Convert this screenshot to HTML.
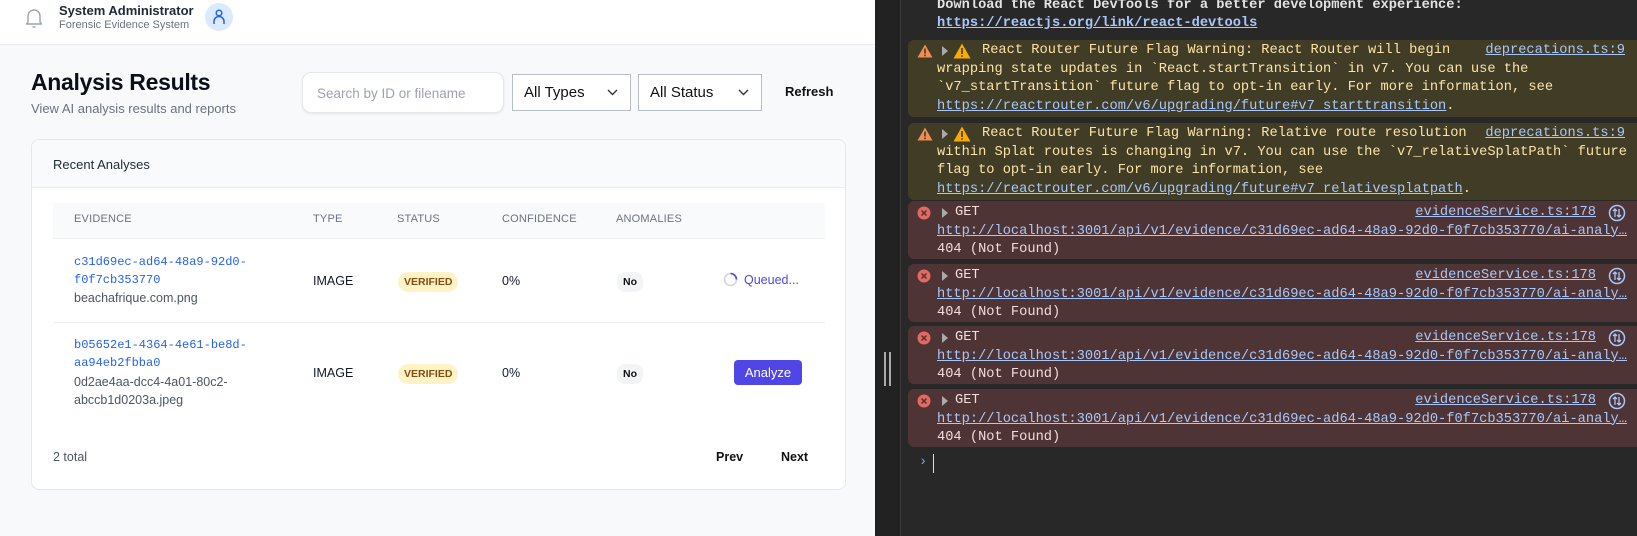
<!DOCTYPE html>
<html><head><meta charset="utf-8"><style>
*{box-sizing:border-box;margin:0;padding:0}
html,body{width:1637px;height:536px;overflow:hidden}
body{position:relative;font-family:"Liberation Sans",sans-serif;background:#f8f9fb}
.a{position:absolute}
#left{position:absolute;left:0;top:0;width:875px;height:536px;background:#f8f9fb}
#hdr{position:absolute;left:0;top:0;width:875px;height:45px;background:#fff;border-bottom:1px solid #eceef1}
.t1{font-size:13px;font-weight:bold;color:#1f2937;white-space:nowrap}
.t2{font-size:11px;color:#6b7280;white-space:nowrap}
.sel{position:absolute;top:74px;height:37px;border:1.5px solid #b9bec6;background:#fff;font-size:15px;color:#111;padding:9px 0 0 11px}
.sel svg{position:absolute;right:12px;top:14px}
#card{position:absolute;left:31px;top:139px;width:815px;height:351px;background:#fff;border:1px solid #e5e7eb;border-radius:8px;overflow:hidden}
.th{position:absolute;top:213px;font-size:11px;color:#6b7280;letter-spacing:.2px}
.mono{font-family:"Liberation Mono",monospace;font-size:12px;color:#2563eb}
.fn{font-size:12.5px;color:#4b5563}
.cell{font-size:12.5px;color:#111827}
.badge{position:absolute;background:#fef3c7;color:#854d0e;font-size:10.5px;font-weight:bold;border-radius:10px;padding:4px 6px}
.no{position:absolute;background:#f3f4f6;color:#111;font-size:10.5px;font-weight:bold;border-radius:8px;padding:4px 6px}
#con{position:absolute;left:875px;top:0;width:762px;height:536px;background:#282828;font-family:"Liberation Mono",monospace;font-size:13.7px;line-height:18.5px;color:#e3e3e3}
#strip{position:absolute;left:0;top:0;width:26px;height:536px;background:#222;border-right:1px solid #3c3c3c}
.box{position:absolute;left:33px;right:0;border-radius:6px 0 0 6px}
.w{background:#413c26;color:#fbe3a8;padding-top:2px;height:77px}
.e{background:#4e3434;color:#f2dcda;padding-top:3px;height:58px}
.ln{padding-left:29px;height:18.5px;white-space:pre;overflow:hidden}
.lk{color:#a8c7fa;text-decoration:underline}
.rt{position:absolute;top:2px;color:#a8c7fa;text-decoration:underline;white-space:pre}
</style></head><body>
<div id="left">
 <div id="hdr">
  <svg class="a" style="left:25px;top:7px" width="18" height="22" viewBox="0 0 18 22"><path d="M3 15V9a6 6 0 0 1 12 0v6l1.5 2h-15z" fill="none" stroke="#9ca3af" stroke-width="1.4" stroke-linejoin="round"/><path d="M7.5 19.5l1.5 1 1.5-1" fill="none" stroke="#9ca3af" stroke-width="1.2"/></svg>
  <div class="a t1" style="left:59px;top:3px">System Administrator</div>
  <div class="a t2" style="left:59px;top:19px">Forensic Evidence System</div>
  <div class="a" style="left:205px;top:3px;width:28px;height:28px;border-radius:50%;background:#dbeafe"></div>
  <svg class="a" style="left:212px;top:8px" width="14" height="18" viewBox="0 0 14 18"><circle cx="7" cy="5" r="2.8" fill="none" stroke="#2563eb" stroke-width="1.5"/><path d="M2 16v-2.5a5 5 0 0 1 10 0V16" fill="none" stroke="#2563eb" stroke-width="1.5"/></svg>
 </div>
 <div class="a" style="left:31px;top:69px;font-size:23px;font-weight:bold;color:#0b0f19;white-space:nowrap;letter-spacing:-0.3px">Analysis Results</div>
 <div class="a" style="left:31px;top:101px;font-size:13px;color:#6b7280;white-space:nowrap">View AI analysis results and reports</div>
 <div class="a" style="left:302px;top:72px;width:202px;height:41px;border:1px solid #e5e7eb;border-radius:9px;background:#fff;box-shadow:0 1px 2px rgba(0,0,0,.08);font-size:13.5px;color:#9ca3af;padding:13px 0 0 14px;white-space:nowrap">Search by ID or filename</div>
 <div class="sel" style="left:512px;width:119px">All Types<svg width="11" height="7" viewBox="0 0 11 7"><path d="M1 1l4.5 4.5L10 1" fill="none" stroke="#333" stroke-width="1.4"/></svg></div>
 <div class="sel" style="left:638px;width:124px">All Status<svg width="11" height="7" viewBox="0 0 11 7"><path d="M1 1l4.5 4.5L10 1" fill="none" stroke="#333" stroke-width="1.4"/></svg></div>
 <div class="a" style="left:785px;top:84px;font-size:13px;font-weight:bold;color:#111">Refresh</div>
 <div id="card">
  <div class="a" style="left:0;top:0;width:815px;height:48px;background:#f9fafb;border-bottom:1px solid #eceef1"></div>
  <div class="a" style="left:21px;top:17px;font-size:13px;color:#1f2937;white-space:nowrap">Recent Analyses</div>
  <div class="a" style="left:21px;top:63px;width:772px;height:36px;background:#f9fafb;border-bottom:1px solid #eef0f3"></div>
  <div class="a" style="left:21px;top:182px;width:772px;height:1px;background:#eceef1"></div>
 </div>
 <div class="th" style="left:74px">EVIDENCE</div>
 <div class="th" style="left:313px">TYPE</div>
 <div class="th" style="left:397px">STATUS</div>
 <div class="th" style="left:502px">CONFIDENCE</div>
 <div class="th" style="left:616px">ANOMALIES</div>
 <div class="a mono" style="left:74px;top:253px;line-height:18px">c31d69ec-ad64-48a9-92d0-<br>f0f7cb353770</div>
 <div class="a fn" style="left:74px;top:291px">beachafrique.com.png</div>
 <div class="a cell" style="left:313px;top:274px">IMAGE</div>
 <div class="badge" style="left:398px;top:272px">VERIFIED</div>
 <div class="a cell" style="left:502px;top:274px">0%</div>
 <div class="no" style="left:617px;top:272px">No</div>
 <svg class="a" style="left:723px;top:272px" width="15" height="15" viewBox="0 0 15 15"><circle cx="7.5" cy="7.5" r="6" fill="none" stroke="#d1d5db" stroke-width="1.6"/><path d="M7.5 1.5a6 6 0 0 1 6 6" fill="none" stroke="#4f46e5" stroke-width="1.6"/></svg>
 <div class="a" style="left:744px;top:273px;font-size:12.5px;color:#4f46e5">Queued...</div>
 <div class="a mono" style="left:74px;top:336px;line-height:18px">b05652e1-4364-4e61-be8d-<br>aa94eb2fbba0</div>
 <div class="a fn" style="left:74px;top:373px;line-height:18px">0d2ae4aa-dcc4-4a01-80c2-<br>abccb1d0203a.jpeg</div>
 <div class="a cell" style="left:313px;top:366px">IMAGE</div>
 <div class="badge" style="left:398px;top:364px">VERIFIED</div>
 <div class="a cell" style="left:502px;top:366px">0%</div>
 <div class="no" style="left:617px;top:364px">No</div>
 <div class="a" style="left:734px;top:360px;width:68px;height:25px;background:#4f46e5;border-radius:4px;color:#fff;font-size:13px;text-align:center;padding-top:5px">Analyze</div>
 <div class="a" style="left:53px;top:450px;font-size:12.5px;color:#4b5563">2 total</div>
 <div class="a" style="left:716px;top:450px;font-size:12.5px;font-weight:bold;color:#111">Prev</div>
 <div class="a" style="left:781px;top:450px;font-size:12.5px;font-weight:bold;color:#111">Next</div>
</div>
<div id="con">
 <div id="strip"><div class="a" style="left:9px;top:352px;width:2px;height:34px;background:#aaa"></div><div class="a" style="left:14px;top:352px;width:2px;height:34px;background:#aaa"></div></div>
 <div class="a" style="left:62px;top:-3px;white-space:pre;font-weight:bold;color:#e3e3e3">Download the React DevTools for a better development experience:</div>
 <div class="a lk" style="left:62px;top:15px;white-space:pre;font-weight:bold">https://reactjs.org/link/react-devtools</div>

 <div class="box w" style="top:40px"><svg class="a" style="left:9px;top:4px" width="16" height="14" viewBox="0 0 16 14"><path d="M8 0.5L15.5 13.5H0.5z" fill="#f28b54"/><rect x="7.2" y="4.5" width="1.6" height="5" fill="#413c26"/><rect x="7.2" y="10.6" width="1.6" height="1.6" fill="#413c26"/></svg><svg class="a" style="left:33px;top:6px" width="8" height="10" viewBox="0 0 8 10"><path d="M1 0l6 5-6 5z" fill="#aaa"/></svg><svg class="a" style="left:45px;top:3px" width="18" height="16" viewBox="0 0 18 16"><path d="M9 0.5L17.5 15.5H0.5z" fill="#f9ab00"/><rect x="8.2" y="5" width="1.6" height="6" fill="#413c26"/><rect x="8.2" y="12.2" width="1.6" height="1.6" fill="#413c26"/></svg><div class="ln" style="padding-left:74px">React Router Future Flag Warning: React Router will begin</div><div class="ln">wrapping state updates in `React.startTransition` in v7. You can use the</div><div class="ln">`v7_startTransition` future flag to opt-in early. For more information, see</div><div class="ln"><span class="lk">https://reactrouter.com/v6/upgrading/future#v7_starttransition</span>.</div><div class="rt" style="right:12px">deprecations.ts:9</div></div>
 <div class="box w" style="top:123px"><svg class="a" style="left:9px;top:4px" width="16" height="14" viewBox="0 0 16 14"><path d="M8 0.5L15.5 13.5H0.5z" fill="#f28b54"/><rect x="7.2" y="4.5" width="1.6" height="5" fill="#413c26"/><rect x="7.2" y="10.6" width="1.6" height="1.6" fill="#413c26"/></svg><svg class="a" style="left:33px;top:6px" width="8" height="10" viewBox="0 0 8 10"><path d="M1 0l6 5-6 5z" fill="#aaa"/></svg><svg class="a" style="left:45px;top:3px" width="18" height="16" viewBox="0 0 18 16"><path d="M9 0.5L17.5 15.5H0.5z" fill="#f9ab00"/><rect x="8.2" y="5" width="1.6" height="6" fill="#413c26"/><rect x="8.2" y="12.2" width="1.6" height="1.6" fill="#413c26"/></svg><div class="ln" style="padding-left:74px">React Router Future Flag Warning: Relative route resolution</div><div class="ln">within Splat routes is changing in v7. You can use the `v7_relativeSplatPath` future</div><div class="ln">flag to opt-in early. For more information, see</div><div class="ln"><span class="lk">https://reactrouter.com/v6/upgrading/future#v7_relativesplatpath</span>.</div><div class="rt" style="right:12px">deprecations.ts:9</div></div>

 <div class="box e" style="top:201px"><svg class="a" style="left:9px;top:5px" width="14" height="14" viewBox="0 0 14 14"><circle cx="7" cy="7" r="6.5" fill="#e46962"/><path d="M4.5 4.5l5 5M9.5 4.5l-5 5" stroke="#4e3434" stroke-width="1.5"/></svg><svg class="a" style="left:33px;top:7px" width="8" height="10" viewBox="0 0 8 10"><path d="M1 0l6 5-6 5z" fill="#aaa"/></svg><div class="ln" style="padding-left:47px">GET</div><div class="ln"><span class="lk">http://localhost:3001/api/v1/evidence/c31d69ec-ad64-48a9-92d0-f0f7cb353770/ai-analy…</span></div><div class="ln">404 (Not Found)</div><div class="rt" style="right:41px;top:3px">evidenceService.ts:178</div><svg class="a" style="right:11px;top:3px" width="18" height="18" viewBox="0 0 18 18"><circle cx="9" cy="9" r="7.5" fill="none" stroke="#a8c7fa" stroke-width="1.5"/><path d="M7 13V5M5 7l2-2 2 2M11 5v8M9 11l2 2 2-2" fill="none" stroke="#a8c7fa" stroke-width="1.3"/></svg></div>
 <div class="box e" style="top:264px"><svg class="a" style="left:9px;top:5px" width="14" height="14" viewBox="0 0 14 14"><circle cx="7" cy="7" r="6.5" fill="#e46962"/><path d="M4.5 4.5l5 5M9.5 4.5l-5 5" stroke="#4e3434" stroke-width="1.5"/></svg><svg class="a" style="left:33px;top:7px" width="8" height="10" viewBox="0 0 8 10"><path d="M1 0l6 5-6 5z" fill="#aaa"/></svg><div class="ln" style="padding-left:47px">GET</div><div class="ln"><span class="lk">http://localhost:3001/api/v1/evidence/c31d69ec-ad64-48a9-92d0-f0f7cb353770/ai-analy…</span></div><div class="ln">404 (Not Found)</div><div class="rt" style="right:41px;top:3px">evidenceService.ts:178</div><svg class="a" style="right:11px;top:3px" width="18" height="18" viewBox="0 0 18 18"><circle cx="9" cy="9" r="7.5" fill="none" stroke="#a8c7fa" stroke-width="1.5"/><path d="M7 13V5M5 7l2-2 2 2M11 5v8M9 11l2 2 2-2" fill="none" stroke="#a8c7fa" stroke-width="1.3"/></svg></div>
 <div class="box e" style="top:326px"><svg class="a" style="left:9px;top:5px" width="14" height="14" viewBox="0 0 14 14"><circle cx="7" cy="7" r="6.5" fill="#e46962"/><path d="M4.5 4.5l5 5M9.5 4.5l-5 5" stroke="#4e3434" stroke-width="1.5"/></svg><svg class="a" style="left:33px;top:7px" width="8" height="10" viewBox="0 0 8 10"><path d="M1 0l6 5-6 5z" fill="#aaa"/></svg><div class="ln" style="padding-left:47px">GET</div><div class="ln"><span class="lk">http://localhost:3001/api/v1/evidence/c31d69ec-ad64-48a9-92d0-f0f7cb353770/ai-analy…</span></div><div class="ln">404 (Not Found)</div><div class="rt" style="right:41px;top:3px">evidenceService.ts:178</div><svg class="a" style="right:11px;top:3px" width="18" height="18" viewBox="0 0 18 18"><circle cx="9" cy="9" r="7.5" fill="none" stroke="#a8c7fa" stroke-width="1.5"/><path d="M7 13V5M5 7l2-2 2 2M11 5v8M9 11l2 2 2-2" fill="none" stroke="#a8c7fa" stroke-width="1.3"/></svg></div>
 <div class="box e" style="top:389px"><svg class="a" style="left:9px;top:5px" width="14" height="14" viewBox="0 0 14 14"><circle cx="7" cy="7" r="6.5" fill="#e46962"/><path d="M4.5 4.5l5 5M9.5 4.5l-5 5" stroke="#4e3434" stroke-width="1.5"/></svg><svg class="a" style="left:33px;top:7px" width="8" height="10" viewBox="0 0 8 10"><path d="M1 0l6 5-6 5z" fill="#aaa"/></svg><div class="ln" style="padding-left:47px">GET</div><div class="ln"><span class="lk">http://localhost:3001/api/v1/evidence/c31d69ec-ad64-48a9-92d0-f0f7cb353770/ai-analy…</span></div><div class="ln">404 (Not Found)</div><div class="rt" style="right:41px;top:3px">evidenceService.ts:178</div><svg class="a" style="right:11px;top:3px" width="18" height="18" viewBox="0 0 18 18"><circle cx="9" cy="9" r="7.5" fill="none" stroke="#a8c7fa" stroke-width="1.5"/><path d="M7 13V5M5 7l2-2 2 2M11 5v8M9 11l2 2 2-2" fill="none" stroke="#a8c7fa" stroke-width="1.3"/></svg></div>
 <div class="a" style="left:44px;top:454px;color:#7aa7f0">›</div>
 <div class="a" style="left:58px;top:454px;width:1px;height:19px;background:#ddd"></div>
</div>
</body></html>
